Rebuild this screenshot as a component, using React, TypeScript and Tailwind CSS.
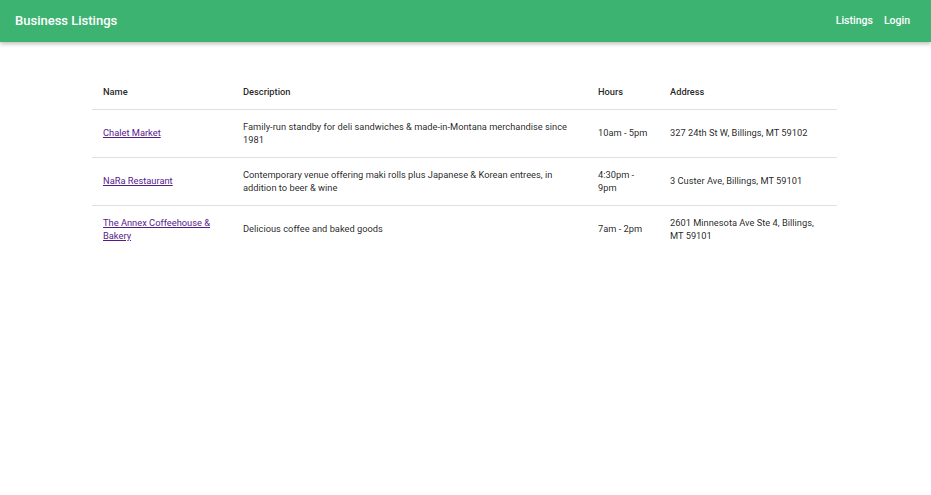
import React from "react";

type Listing = {
    name: string;
    description: string;
    hours: string;
    address: string;
};

const listings: Listing[] = [
    {
        name: "Chalet Market",
        description:
            "Family-run standby for deli sandwiches & made-in-Montana merchandise since 1981",
        hours: "10am - 5pm",
        address: "327 24th St W, Billings, MT 59102",
    },
    {
        name: "NaRa Restaurant",
        description:
            "Contemporary venue offering maki rolls plus Japanese & Korean entrees, in addition to beer & wine",
        hours: "4:30pm - 9pm",
        address: "3 Custer Ave, Billings, MT 59101",
    },
    {
        name: "The Annex Coffeehouse & Bakery",
        description: "Delicious coffee and baked goods",
        hours: "7am - 2pm",
        address: "2601 Minnesota Ave Ste 4, Billings, MT 59101",
    },
];

export default function App() {
    return (
        <div className="min-h-[495px] bg-white font-['Roboto',sans-serif] text-[rgba(0,0,0,0.87)]">
            <header className="flex h-[42px] items-center justify-between bg-[#3db372] pl-[15px] pr-[21px] shadow-[0_2px_4px_rgba(0,0,0,0.25)]">
                <h1 className="text-[13px] font-medium text-white">Business Listings</h1>
                <nav className="flex items-center gap-[11px] text-[10.5px] font-medium text-white">
                    <a href="#">Listings</a>
                    <a href="#">Login</a>
                </nav>
            </header>

            <main className="mx-auto mt-[33px] w-[745px] -translate-x-px">
                <table className="w-full table-fixed border-collapse text-left text-[9.3px] leading-[13.5px]">
                    <colgroup>
                        <col className="w-[140px]" />
                        <col className="w-[355px]" />
                        <col className="w-[72px]" />
                        <col className="w-[178px]" />
                    </colgroup>
                    <thead>
                        <tr className="border-b border-[#e0e0e0]">
                            <th className="px-[11px] py-[10px] font-medium">Name</th>
                            <th className="px-[11px] py-[10px] font-medium">Description</th>
                            <th className="px-[11px] py-[10px] font-medium">Hours</th>
                            <th className="px-[11px] py-[10px] font-medium">Address</th>
                        </tr>
                    </thead>
                    <tbody>
                        {listings.map((item, i) => (
                            <tr
                                key={item.name}
                                className={i < listings.length - 1 ? "border-b border-[#e0e0e0]" : ""}
                            >
                                <td className="px-[11px] py-[10px]">
                                    <a href="#" className="text-[#551a8b] underline">
                                        {item.name}
                                    </a>
                                </td>
                                <td className="px-[11px] py-[10px]">{item.description}</td>
                                <td className="px-[11px] py-[10px]">{item.hours}</td>
                                <td className="px-[11px] py-[10px]">{item.address}</td>
                            </tr>
                        ))}
                    </tbody>
                </table>
            </main>
        </div>
    );
}
